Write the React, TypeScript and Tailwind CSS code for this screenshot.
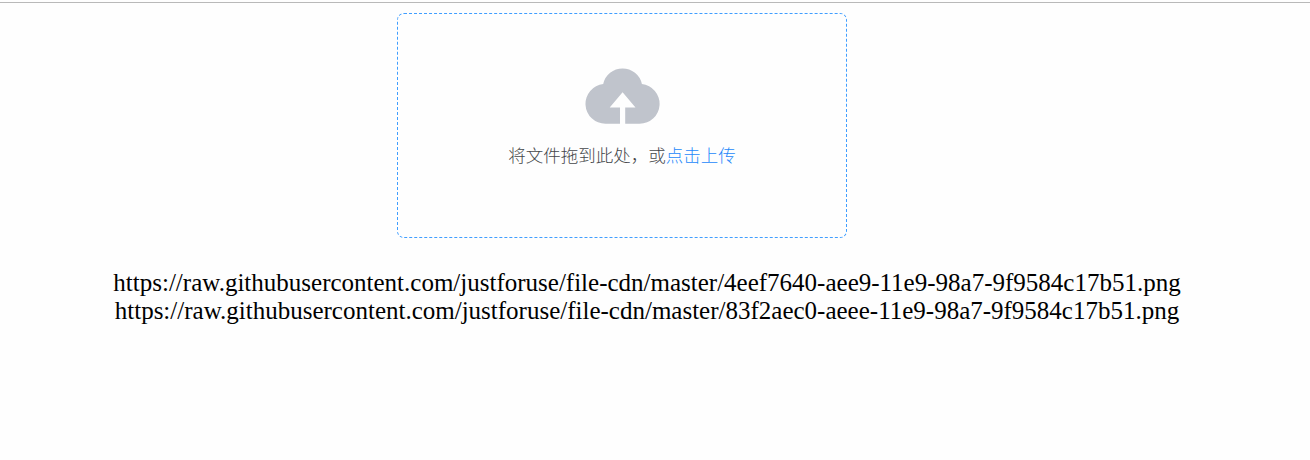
const files = [
  '4eef7640-aee9-11e9-98a7-9f9584c17b51.png',
  '83f2aec0-aeee-11e9-98a7-9f9584c17b51.png',
];

export default function App() {
  return (
    <div className="flex h-[460px] w-full flex-col bg-[#fefefe] pt-[2px]">
      <div className="h-px shrink-0 bg-[#b9b9b9]" />
      <div className="mt-[10px] ml-[397px] flex h-[225px] w-[450px] shrink-0 flex-col items-center rounded-[7px] border border-dashed border-[#409eff] pt-[54px]">
        <svg className="h-[56px] w-[75px] shrink-0" viewBox="0 0 75 56">
          <path
            fill="#c0c4cc"
            fillRule="evenodd"
            d="M35 55.700H20.400a19.900 19.900 0 0 1-2.200-39.678a19.800 19.800 0 0 1 38.700 0A19.900 19.900 0 0 1 54.700 55.700H40.200V39.500H50.500L37.600 24.300L24.700 39.500H35Z"
          />
        </svg>
        <p className="mt-[19px] whitespace-nowrap font-['Liberation_Sans','Noto_Sans_CJK_SC',sans-serif] text-[17.5px] leading-[26px] font-light text-[#45474a]">
          将文件拖到此处，或<span className="text-[#2589fa]">点击上传</span>
        </p>
      </div>
      <div className="mt-[31px] ml-[113px] w-[1068px] text-center font-['Liberation_Serif',serif] text-[25px] leading-[28px] whitespace-nowrap text-black">
        {files.map((file) => (
          <div key={file}>https://raw.githubusercontent.com/justforuse/file-cdn/master/{file}</div>
        ))}
      </div>
    </div>
  );
}
